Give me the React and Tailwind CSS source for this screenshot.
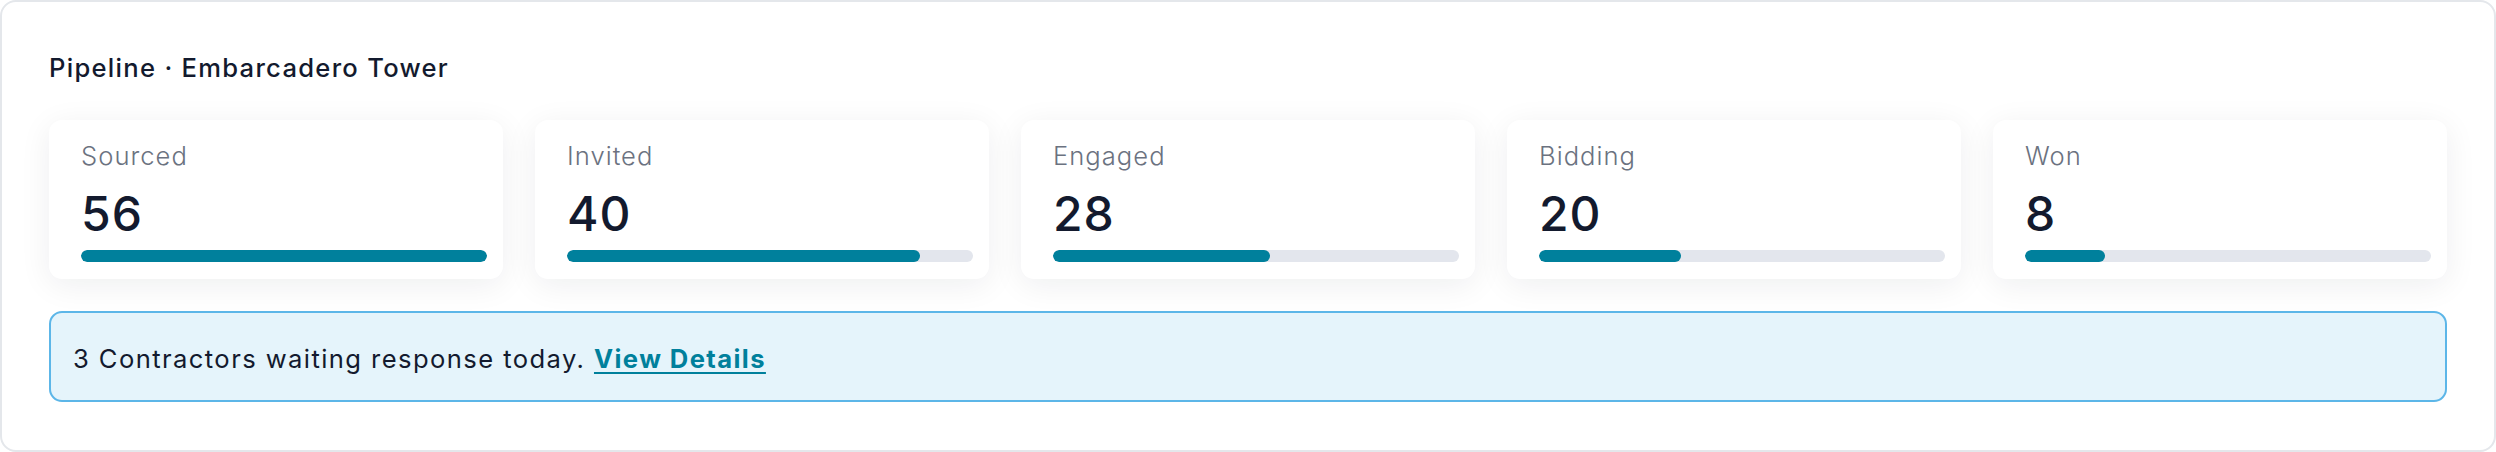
import React from "react";

const stages = [
  { id: 1, label: "Sourced", count: 56, pct: 100 },
  { id: 2, label: "Invited", count: 40, pct: 87 },
  { id: 3, label: "Engaged", count: 28, pct: 53.5 },
  { id: 4, label: "Bidding", count: 20, pct: 35 },
  { id: 5, label: "Won", count: 8, pct: 19.6 },
];

const StageCard = ({ stage }) => (
  <div className="flex flex-col bg-white rounded-[13px] pt-[20px] pb-[17px] pl-[32px] pr-[16px] shadow-[0_6px_32px_rgba(15,23,42,0.07)]">
    <span className="text-[25.6px] leading-[32px] font-light tracking-[0.04em] text-[#6b7280]">{stage.label}</span>
    <span className="mt-[14px] text-[48px] leading-[56px] font-medium tracking-[0.02em] text-[#131a2e]">{stage.count}</span>
    <div className="mt-[8px] h-[12px] w-full rounded-full bg-[#e3e6ed] overflow-hidden">
      <div className="h-full rounded-full bg-[#00809c]" style={{ width: `${stage.pct}%` }} />
    </div>
  </div>
);

const App = () => {
  return (
    <div className="w-full h-[452px] bg-white font-['Inter','Noto_Sans',sans-serif]">
      <div className="h-full rounded-[16px] border-2 border-[#e4e7eb] p-[47px] flex flex-col">
        {/* Header */}
        <h1 className="text-[25.6px] leading-[38px] font-medium tracking-[0.05em] text-[#131a2e]">
          Pipeline · Embarcadero Tower
        </h1>

        {/* Stage cards */}
        <div className="mt-[33px] grid grid-cols-5 gap-[32px]">
          {stages.map((stage) => (
            <StageCard key={stage.id} stage={stage} />
          ))}
        </div>

        {/* Alert */}
        <div className="mt-[32px] rounded-[13px] border-2 border-[#5cb6e8] bg-[#e5f4fb] px-[22px] pt-[27px] pb-[22px] text-[25.6px] leading-[38px] tracking-[0.055em] text-[#131a2e]">
          3 Contractors waiting response today.{" "}
          <a href="#" className="font-bold text-[#00809c] underline underline-offset-4">
            View Details
          </a>
        </div>
      </div>
    </div>
  );
};

export default App;
